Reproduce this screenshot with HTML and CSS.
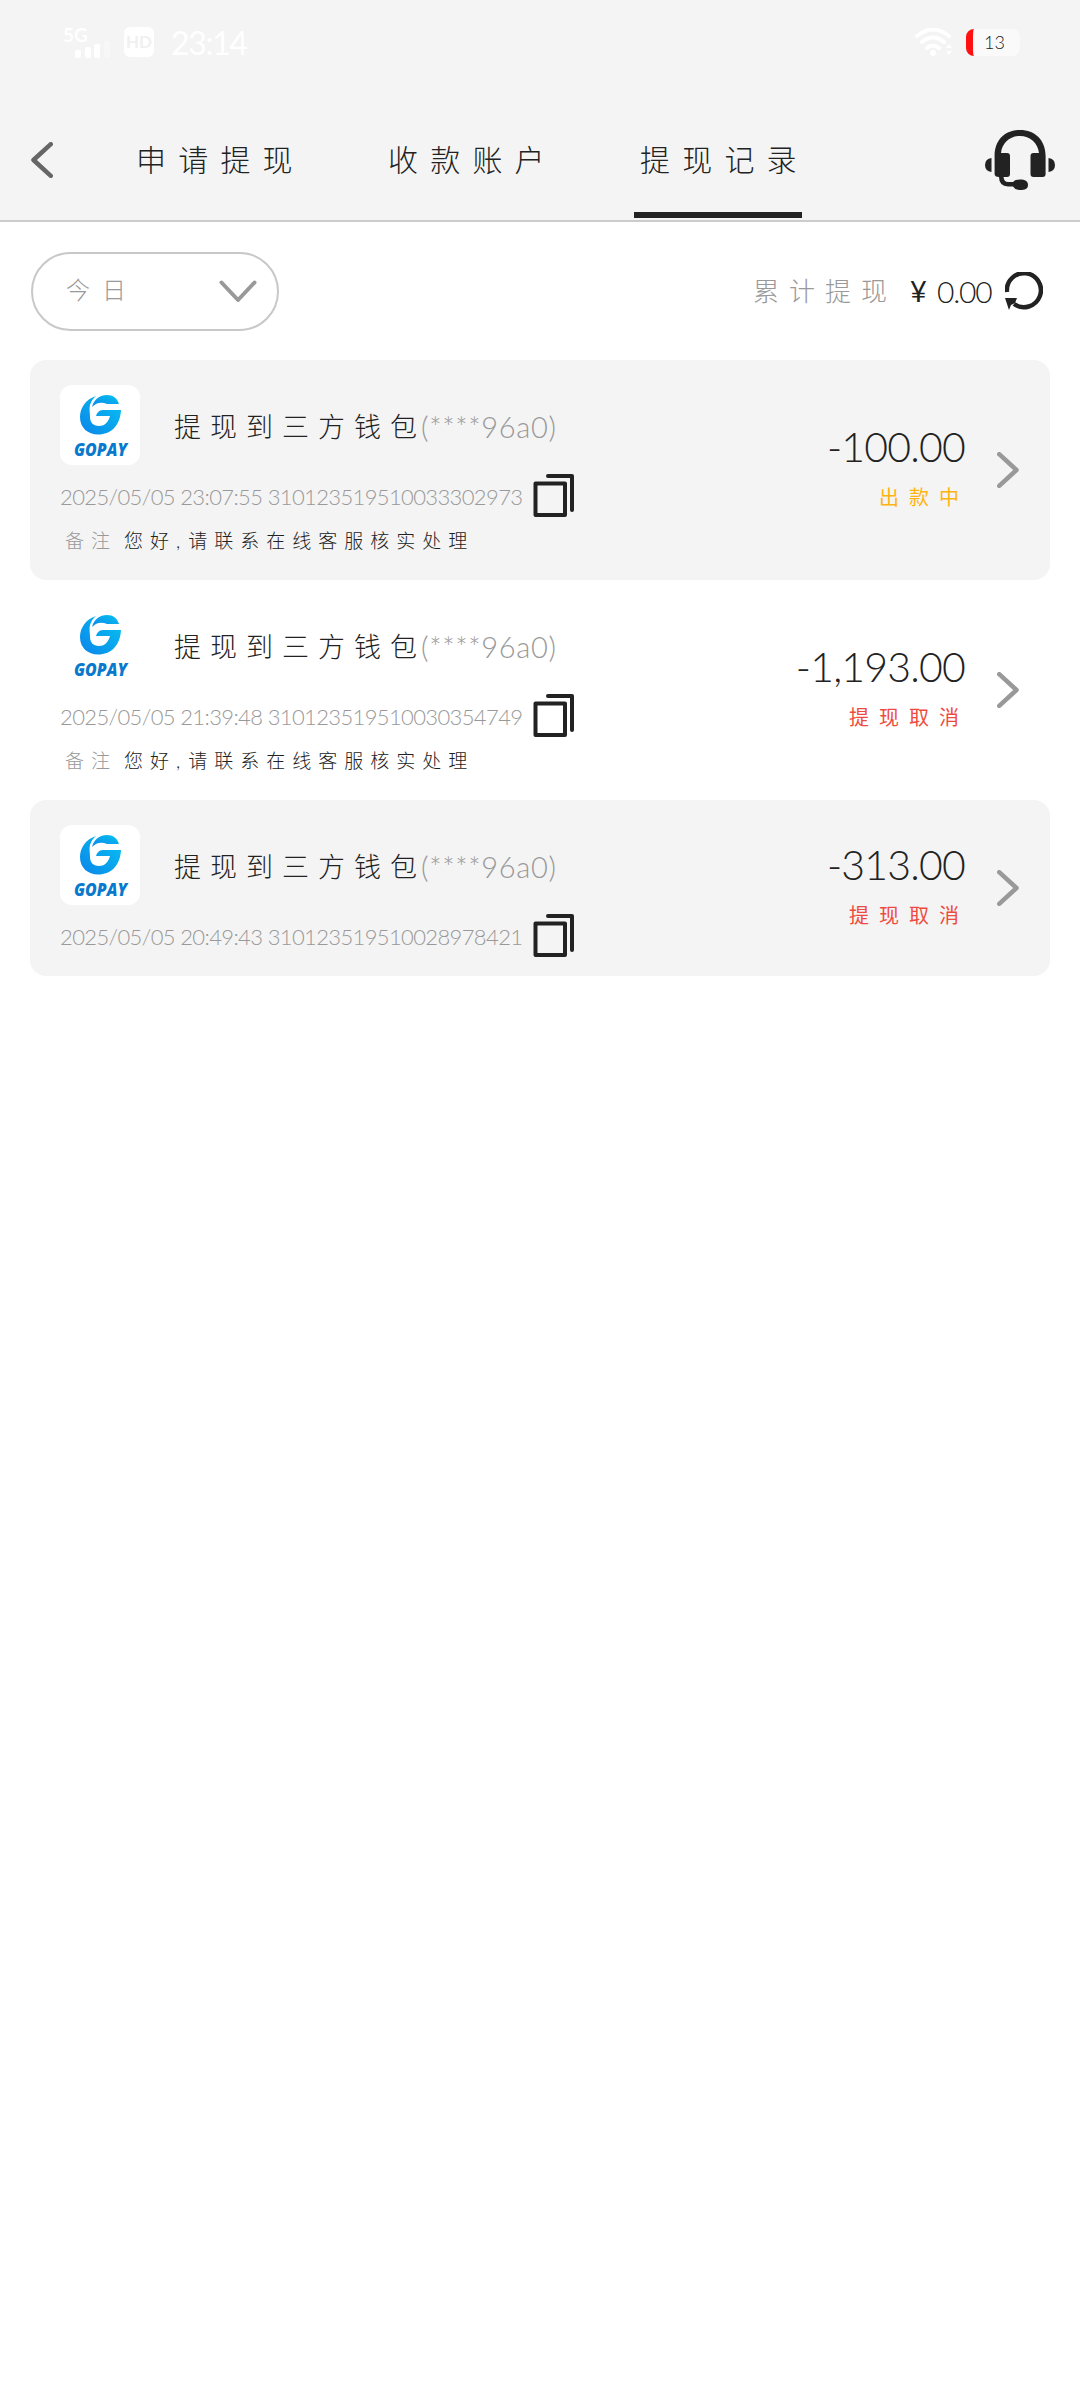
FILE: index.html
```
<!DOCTYPE html>
<html lang="zh-CN">
<head>
  <meta charset="UTF-8">
  <title>提现记录</title>
  <link rel="stylesheet" href="styles.css">
</head>
<body>
  <svg width="0" height="0" class="defs">
    <defs>
      <linearGradient id="blue" x1="0" y1="1" x2="1" y2="0">
        <stop offset="0" stop-color="#0a84ea"/>
        <stop offset="1" stop-color="#08c4f0"/>
      </linearGradient>
      <symbol id="logo" viewBox="0 0 80 80">
        <path fill="url(#blue)" d="M36 11C26 14 20 23 20 32C20 43 28 49.500 38 49.500C51 49.500 60 41 61 25H43C39 25 37 28 36 31H50C48 38 44 41 39 41C33 41 30 37 30 32C30 28 29 24 30 20Q32 14 36 11Z"/>
        <path fill="url(#blue)" d="M32 22C34 14 40 10 47 10C53 10 57 13 59 19H47C41 16.500 36 18 32 22Z"/>
        <text x="14" y="71" textLength="53" lengthAdjust="spacingAndGlyphs">GOPAY</text>
      </symbol>
      <symbol id="copy" viewBox="0 0 41 43">
        <path d="M2.500 9.500H32V41H2.500ZM15 2H39V36"/>
      </symbol>
      <symbol id="arrow" viewBox="0 0 22 36">
        <path d="M2.200 2.200L19.500 18L2.200 33.800"/>
      </symbol>
    </defs>
  </svg>

  <header class="header">
    <div class="status-bar">
      <svg class="signal" width="50" height="36" viewBox="0 0 50 36">
        <text x="1" y="18">5G</text>
        <rect x="13" y="26" width="6" height="8" rx="2"/>
        <rect x="23" y="23" width="6" height="11" rx="2"/>
        <rect x="32" y="20" width="6" height="14" rx="2"/>
        <rect x="42" y="17" width="6" height="17" rx="2" opacity=".3"/>
      </svg>
      <span class="hd">HD</span>
      <span class="clock">23:14</span>
      <svg class="wifi" width="38" height="28" viewBox="0 0 38 28">
        <path d="M2 8Q18-5 34 8M7 14Q18 5 29 14M12 20Q18 15 24 20"/>
        <circle cx="18" cy="25" r="3"/>
        <path class="tri" d="M34 16l3 4h-6zM34 27l3-4h-6z"/>
      </svg>
      <span class="battery">13</span>
    </div>
    <nav class="nav">
      <svg class="back" width="22" height="36" viewBox="0 0 22 36"><path d="M19.800 2.200L2.500 18L19.800 33.800"/></svg>
      <div class="tabs">
        <a class="tab">申请提现</a>
        <a class="tab">收款账户</a>
        <a class="tab active">提现记录</a>
      </div>
      <svg class="service" width="70" height="60" viewBox="0 0 70 60">
        <path d="M9.600 42V26C9.600 10 20 0 35 0S60.600 10 60.600 26V44q0 3-3 3H48.500q-3 0-3-3V26q0-3 3-3H54C53 13 45 6 35 6S17 13 16 23H22q3 0 3 3V44q0 3-3 3H18.500Q19 52 23 52H28Q30 49.500 35 49.500C40 49.500 43 51 43 55S40 60 35 60Q30 60 28 56.500H23Q14 56 14 47Q9.600 47 9.600 44Z"/>
        <path d="M6.500 28V42Q0 41 0 35T6.500 28ZM63.500 28V42Q70 41 70 35T63.500 28Z"/>
      </svg>
    </nav>
  </header>

  <div class="filter">
    <div class="select">
      <span>今日</span>
      <svg width="38" height="23" viewBox="0 0 38 23"><path d="M2.500 2.500L19 20L35.500 2.500"/></svg>
    </div>
    <div class="total">
      <span class="total-label">累计提现</span>
      <span class="yen">¥</span>
      <span class="total-value">0.00</span>
      <svg class="refresh" width="38" height="38" viewBox="0 0 38 38">
        <path class="ring" d="M2 20A17 17 0 1 1 9 32"/>
        <path class="tip" d="M0 26L12 26L10 31L6 33L4 38Z"/>
      </svg>
    </div>
  </div>

  <main class="list">
    <div class="card gray">
      <div class="info">
        <div class="top">
          <svg class="logo"><use href="#logo"/></svg>
          <span class="name">提现到三方钱包</span><span class="account">(****96a0)</span>
        </div>
        <div class="order">
          <span class="order-no">2025/05/05 23:07:55 310123519510033302973</span>
          <svg class="copy"><use href="#copy"/></svg>
        </div>
        <div class="note"><span class="note-label">备注</span><span>您好,</span><span class="note-rest">请联系在线客服核实处理</span></div>
      </div>
      <div class="right">
        <div class="amount">-100.00</div>
        <div class="state pending">出款中</div>
      </div>
      <svg class="arrow"><use href="#arrow"/></svg>
    </div>

    <div class="card">
      <div class="info">
        <div class="top">
          <svg class="logo"><use href="#logo"/></svg>
          <span class="name">提现到三方钱包</span><span class="account">(****96a0)</span>
        </div>
        <div class="order">
          <span class="order-no">2025/05/05 21:39:48 310123519510030354749</span>
          <svg class="copy"><use href="#copy"/></svg>
        </div>
        <div class="note"><span class="note-label">备注</span><span>您好,</span><span class="note-rest">请联系在线客服核实处理</span></div>
      </div>
      <div class="right">
        <div class="amount">-1,193.00</div>
        <div class="state cancel">提现取消</div>
      </div>
      <svg class="arrow"><use href="#arrow"/></svg>
    </div>

    <div class="card gray">
      <div class="info">
        <div class="top">
          <svg class="logo"><use href="#logo"/></svg>
          <span class="name">提现到三方钱包</span><span class="account">(****96a0)</span>
        </div>
        <div class="order">
          <span class="order-no">2025/05/05 20:49:43 310123519510028978421</span>
          <svg class="copy"><use href="#copy"/></svg>
        </div>
      </div>
      <div class="right">
        <div class="amount">-313.00</div>
        <div class="state cancel">提现取消</div>
      </div>
      <svg class="arrow"><use href="#arrow"/></svg>
    </div>
  </main>
</body>
</html>
```

FILE: styles.css
```
* {
  box-sizing: border-box;
}

body {
  margin: 0;
  background-color: #fff;
  color: #222;
  font-family: Lato, "Noto Sans CJK SC", sans-serif;
  font-weight: 300;
}

svg {
  display: block;
  flex-shrink: 0;
  fill: none;
  stroke-linecap: round;
  stroke-linejoin: round;
}

.defs {
  position: absolute;
}

/* Header */
.header {
  height: 222px;
  background-color: #f4f4f4;
  border-bottom: 2px solid #ccc;
}

.status-bar {
  display: flex;
  align-items: center;
  height: 84px;
  padding: 0 60px 0 62px;
  color: #fff;
}

.signal {
  overflow: visible;
  fill: #fff;
  font-size: 19px;
  font-weight: 700;
}

.hd {
  width: 30px;
  height: 30px;
  margin-left: 12px;
  border-radius: 6px;
  background-color: #fff;
  color: #f0f0f0;
  font-size: 17px;
  font-weight: 700;
  line-height: 30px;
  text-align: center;
}

.clock {
  margin-left: 17px;
  font-size: 32px;
  font-weight: 400;
  letter-spacing: -1.300px;
}

.wifi {
  margin-left: auto;
  stroke: #fff;
  stroke-width: 4;
}

.wifi circle,
.wifi .tri {
  fill: #fff;
  stroke: none;
}

.battery {
  width: 54px;
  height: 27px;
  margin-left: 13px;
  padding-left: 11px;
  border-left: 7px solid #f11;
  border-radius: 8px;
  background-color: #fafafa;
  color: #222;
  font-size: 18px;
  line-height: 27px;
}

.nav {
  display: flex;
  align-items: center;
  height: 136px;
  padding: 0 25px 0 31px;
}

.back {
  align-self: flex-start;
  margin-top: 58px;
  stroke: #666;
  stroke-width: 4.500;
}

.tabs {
  display: flex;
  align-self: stretch;
  gap: 84px;
  margin-left: 77px;
}

.tab {
  width: 168px;
  height: 134px;
  padding-left: 6px;
  font-size: 30px;
  letter-spacing: 12.200px;
  line-height: 150px;
  white-space: nowrap;
}

.tab.active {
  border-bottom: 6px solid #222;
}

.service {
  align-self: flex-start;
  margin-top: 46px;
  margin-left: auto;
  fill: #222;
}

/* Filter */
.filter {
  display: flex;
  align-items: center;
  justify-content: space-between;
  height: 138px;
  padding: 0 37px 0 31px;
}

.select {
  display: flex;
  align-items: center;
  justify-content: space-between;
  width: 248px;
  height: 79px;
  padding: 0 20px 0 33px;
  border: 2px solid #c8c8c8;
  border-radius: 40px;
  color: #999;
  font-size: 24px;
  letter-spacing: 12px;
  line-height: 36px;
}

.select span {
  margin-bottom: 2px;
}

.select svg {
  stroke: #999;
  stroke-width: 4;
}

.total {
  display: flex;
  align-items: center;
}

.total-label {
  margin-right: 13px;
  margin-bottom: 4px;
  color: #999;
  font-size: 26px;
  letter-spacing: 10px;
}

.yen {
  width: 27px;
  margin-bottom: 2px;
  font-size: 29px;
  font-weight: 400;
}

.total-value {
  width: 68px;
  font-size: 30px;
  letter-spacing: -1.200px;
}

.refresh .ring {
  stroke: #222;
  stroke-width: 4.500;
  stroke-linecap: butt;
}

.refresh .tip {
  fill: #222;
}

/* List */
.list {
  padding: 0 30px;
}

.card {
  display: flex;
  align-items: center;
  height: 220px;
  padding: 0 31px 0 30px;
  border-radius: 16px;
}

.card:last-child {
  height: 176px;
}

.gray {
  background-color: #f4f4f4;
}

.info {
  align-self: flex-start;
  padding-top: 25px;
}

.top {
  display: flex;
  align-items: center;
  height: 80px;
}

.logo {
  width: 80px;
  height: 80px;
  margin-right: 34px;
  border-radius: 12px;
  background-color: #fff;
}

#logo text {
  fill: #0879cd;
  font-family: "Open Sans", sans-serif;
  font-size: 18px;
  font-style: italic;
  font-weight: 800;
}

.name {
  width: 247px;
  font-size: 27px;
  letter-spacing: 9px;
  white-space: nowrap;
}

.account {
  padding-top: 2px;
  color: #999;
  font-size: 29px;
  letter-spacing: .7px;
}

.order {
  display: flex;
  align-items: center;
  height: 61px;
}

.order-no {
  width: 473px;
  padding-top: 1px;
  color: #999;
  font-size: 22px;
  letter-spacing: -.63px;
  white-space: nowrap;
}

.copy {
  width: 41px;
  height: 43px;
  stroke: #222;
  stroke-width: 4;
}

.note {
  display: flex;
  padding: 1px 0 0 5px;
  font-size: 19px;
  letter-spacing: 7px;
  line-height: 28px;
}

.note-label {
  width: 59px;
  color: #999;
}

.note-rest {
  margin-left: 1px;
}

.right {
  margin-left: auto;
  padding-top: 4px;
  text-align: right;
}

.amount {
  margin-right: -2px;
  font-size: 41px;
  letter-spacing: -.8px;
  line-height: 50px;
}

.state {
  margin-right: -6px;
  font-size: 20px;
  font-weight: 400;
  letter-spacing: 10px;
  line-height: 50px;
}

.pending {
  color: #ffb310;
}

.cancel {
  color: #ee4b40;
}

.arrow {
  width: 22px;
  height: 36px;
  margin-left: 34px;
  stroke: #999;
  stroke-width: 4.500;
}
```
